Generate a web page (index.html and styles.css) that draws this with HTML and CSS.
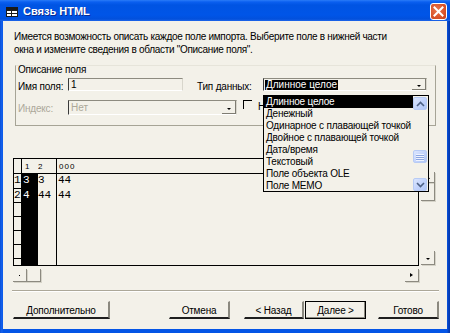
FILE: index.html
```html
<!DOCTYPE html>
<html lang="ru">
<head>
<meta charset="utf-8">
<title>Связь HTML</title>
<link rel="stylesheet" href="styles.css">
</head>
<body>
<div class="window">
  <div class="titlebar">
    <svg class="app-icon" width="12" height="10" viewBox="0 0 12 10">
      <rect x="0.5" y="0.5" width="11" height="9" fill="#fff" stroke="#1a1a1a"/>
      <line x1="0" y1="3.5" x2="12" y2="3.5" stroke="#1a1a1a"/>
      <line x1="0" y1="6.5" x2="12" y2="6.5" stroke="#1a1a1a"/>
      <line x1="5.5" y1="0" x2="5.5" y2="10" stroke="#1a1a1a"/>
      <rect x="1" y="1" width="10" height="2" fill="#1a1a1a"/>
    </svg>
    <span class="title">Связь HTML</span>
    <span class="spacer"></span>
    <span class="close">
      <svg width="11" height="11" viewBox="0 0 11 11"><path d="M1.5 1.5 L9.5 9.5 M9.5 1.5 L1.5 9.5" stroke="#fff" stroke-width="2" stroke-linecap="square"/></svg>
    </span>
  </div>
  <div class="client">
    <p class="intro">Имеется возможность описать каждое поле импорта. Выберите поле в нижней части<br>окна и измените сведения в области "Описание поля".</p>

    <div class="group">
      <div class="legend">Описание поля</div>
      <div class="row row-1">
        <span class="lbl lbl-name">Имя поля:</span>
        <span class="textbox">1</span>
        <span class="lbl lbl-type">Тип данных:</span>
        <span class="combo combo-type">
          <span class="combo-text"><span class="sel">Длинное целое</span></span>
          <span class="combo-btn"><span class="arr"></span></span>
        </span>
      </div>
      <div class="row row-2">
        <span class="lbl lbl-index">Индекс:</span>
        <span class="combo combo-index disabled">
          <span class="combo-text">Нет</span>
          <span class="combo-btn"><span class="arr"></span></span>
        </span>
        <span class="check"></span>
        <span class="lbl lbl-check">Не включать поле</span>
      </div>
    </div>

    <div class="table-area">
      <div class="datagrid">
        <div class="hcell rh"></div>
        <div class="hcell c1">1</div>
        <div class="hcell c2">2</div>
        <div class="hcell c3">000</div>

        <div class="rh">1</div>
        <div class="c1 sel-col">3</div>
        <div class="c2">3</div>
        <div class="c3">44</div>

        <div class="rh">2</div>
        <div class="c1 sel-col">4</div>
        <div class="c2">44</div>
        <div class="c3">44</div>

        <div class="rh"></div><div class="c1 sel-col"></div><div class="c2"></div><div class="c3"></div>
        <div class="rh"></div><div class="c1 sel-col"></div><div class="c2"></div><div class="c3"></div>
        <div class="rh"></div><div class="c1 sel-col"></div><div class="c2"></div><div class="c3"></div>
        <div class="rh"></div><div class="c1 sel-col"></div><div class="c2"></div><div class="c3"></div>
        <div class="rh last"></div><div class="c1 sel-col"></div><div class="c2"></div><div class="c3"></div>
      </div>
      <div class="vscroll">
        <span class="sb sb-up"><span class="tri-up"></span></span>
        <span class="sb sb-thumb"></span>
        <span class="vspace"></span>
        <span class="sb sb-down"><span class="tri-down"></span></span>
      </div>
    </div>
    <div class="hscroll">
      <span class="sb sb-h"><span class="dot"></span></span>
      <span class="sb sb-h"></span>
      <span class="hspace"></span>
      <span class="sb sb-h"><span class="tri-right"></span></span>
    </div>

    <div class="separator"></div>

    <div class="buttons">
      <span class="btn btn-more">Дополнительно</span>
      <span class="btn btn-cancel">Отмена</span>
      <span class="btn btn-back">&lt; Назад</span>
      <span class="btn btn-next">Далее &gt;</span>
      <span class="btn btn-done">Готово</span>
    </div>

    <div class="dropdown">
      <div class="items">
        <div class="item active">Длинное целое</div>
        <div class="item">Денежный</div>
        <div class="item">Одинарное с плавающей точкой</div>
        <div class="item">Двойное с плавающей точкой</div>
        <div class="item">Дата/время</div>
        <div class="item">Текстовый</div>
        <div class="item">Поле объекта OLE</div>
        <div class="item">Поле MEMO</div>
      </div>
      <div class="xp-scroll">
        <span class="xp-btn xp-up">
          <svg width="9" height="6" viewBox="0 0 9 6"><path d="M1 5 L4.5 1.5 L8 5" fill="none" stroke="#4d6185" stroke-width="1.6"/></svg>
        </span>
        <span class="xp-gap1"></span>
        <span class="xp-btn xp-thumb">
          <svg width="8" height="8" viewBox="0 0 8 8"><path d="M0 1.5H8M0 3.5H8M0 5.5H8M0 7.5H8" stroke="#eef3ff" stroke-width="1"/><path d="M0 2.5H8M0 4.5H8M0 6.5H8" stroke="#8ca6e0" stroke-width="1"/></svg>
        </span>
        <span class="xp-gap2"></span>
        <span class="xp-btn xp-down">
          <svg width="9" height="6" viewBox="0 0 9 6"><path d="M1 1 L4.5 4.5 L8 1" fill="none" stroke="#4d6185" stroke-width="1.6"/></svg>
        </span>
      </div>
    </div>
  </div>
</div>
</body>
</html>
```
FILE: styles.css
```css
* { box-sizing: border-box; }

body {
  margin: 0;
  font-family: "Liberation Sans", Arial, sans-serif;
  font-size: 10px;
  color: #000;
  background: #fff;
}

.window {
  width: 450px;
  height: 333px;
  display: flex;
  flex-direction: column;
  background: linear-gradient(90deg, #0a4fd6 0, #1663ef 2px, #0455e6 3px, #0455e6 447px, #0844c4 448px, #0036ab 450px);
}

.titlebar {
  height: 21px;
  flex: none;
  display: flex;
  align-items: center;
  padding: 0 3px 0 6px;
  background: linear-gradient(180deg, #2a7cf7 0, #0a5ff0 2px, #0054e3 5px, #0055e8 15px, #0250dc 19px, #1e66ea 21px);
  color: #fff;
}

.app-icon { flex: none; margin-top: 3px; }

.title {
  margin-left: 5px;
  font-weight: bold;
  font-size: 11px;
  text-shadow: 1px 1px 0 #0a2a90;
}

.spacer { flex: 1; }

.close {
  width: 17px;
  height: 17px;
  margin-top: 1px;
  border: 1px solid #fff;
  border-radius: 3px;
  background: radial-gradient(circle at 40% 40%, #e8764f 0, #d9532a 60%, #c13f1b 100%);
  display: flex;
  align-items: center;
  justify-content: center;
}

.client {
  flex: 1;
  margin: 0 3px 4px;
  background: #f3f1e9;
  position: relative;
  padding: 9px 0 0 10px;
}

.intro {
  margin: 0;
  padding-left: 1px;
  line-height: 13px;
  font-size: 10px;
  letter-spacing: -0.3px;
  white-space: nowrap;
}

/* group box */
.group {
  margin: 9px 0 0 2px;
  width: 421px;
  height: 61px;
  border: 1px solid #a6a496;
  border-top-color: #e6e4da;
}

.legend {
  padding-left: 2px;
  line-height: 10px;
  height: 10px;
  font-size: 10px;
  letter-spacing: -0.2px;
  margin-top: -1px;
}

.row {
  display: flex;
  align-items: flex-start;
}

.row-1 { margin-top: 3px; height: 13px; }
.row-2 { margin-top: 9px; height: 15px; }

.lbl { font-size: 10px; line-height: 11px; white-space: nowrap; letter-spacing: -0.2px; }
.lbl-name { width: 52px; padding-left: 2px; padding-top: 3px; }
.lbl-type { width: 66px; margin-left: 14px; padding-top: 3px; }
.lbl-index { width: 52px; padding-left: 2px; padding-top: 3px; color: #aca899; }
.lbl-check { margin-left: 6px; padding-top: 1px; }

.textbox {
  width: 115px;
  height: 13px;
  border-top: 1px solid #8d8b80;
  border-left: 1px solid #3a3a3a;
  border-right: 1px solid #d8d6cc;
  border-bottom: 1px solid #fff;
  line-height: 11px;
  padding-left: 2px;
  font-size: 10px;
}

.combo {
  display: flex;
  border-top: 1px solid #8d8b80;
  border-left: 1px solid #3a3a3a;
  border-right: 1px solid #d8d6cc;
  border-bottom: 1px solid #fff;
}

.combo-type { width: 164px; height: 13px; }
.combo-index { width: 169px; height: 15px; }

.combo-text {
  flex: 1;
  line-height: 11px;
  padding-left: 1px;
  font-size: 10px;
}

.combo-index .combo-text { color: #aca899; padding-top: 1px; padding-left: 2px; }

.sel { background: #000; color: #fff; padding: 0 1px; display: inline-block; line-height: 10px; }

.combo-btn {
  width: 14px;
  border-right: 1px solid #7e7c72;
  border-bottom: 1px solid #7e7c72;
  display: flex;
  align-items: center;
  justify-content: center;
}

.arr {
  width: 0; height: 0;
  border-left: 2px solid transparent;
  border-right: 2px solid transparent;
  border-top: 2px solid #000;
  margin-top: 3px;
}

.check {
  width: 9px;
  height: 9px;
  margin: 0 0 0 6px;
  border-top: 1px solid #000;
  border-left: 1px solid #000;
}

/* data grid */
.table-area {
  display: flex;
  margin-top: 32px;
  height: 108px;
}

.datagrid {
  width: 406px;
  height: 108px;
  border: 1px solid #000;
  display: grid;
  grid-template-columns: 8px 16px 19px 1fr;
  grid-template-rows: 15px 15px 14px 14px 14px 14px 14px 1fr;
  font-family: "Liberation Mono", "Courier New", monospace;
  font-size: 11px;
  line-height: 13px;
  overflow: hidden;
}

.datagrid > div { overflow: hidden; white-space: nowrap; }

.hcell {
  border-bottom: 1px solid #000;
  font-family: "Liberation Sans", Arial, sans-serif;
  font-size: 8px;
  letter-spacing: 1px;
  padding-top: 1px;
}

.hcell.c1 { padding-left: 3px; }
.hcell.c2 { padding-left: 0; }
.hcell.c3 { padding-left: 2px; }

.rh {
  border-right: 1px solid #000;
  border-bottom: 1px solid #000;
  padding-left: 1px;
  text-indent: -1px;
}

.rh.last { border-bottom: none; }

.c1 { padding-left: 1px; }
.c2 { border-right: 1px solid #000; padding-left: 0; }
.c3 { padding-left: 1px; }

.sel-col { background: #000; color: #fff; }

.vscroll {
  width: 14px;
  margin-left: 2px;
  display: flex;
  flex-direction: column;
}

.sb {
  display: flex;
  align-items: center;
  justify-content: center;
  border-right: 1px solid #8c8a80;
  border-bottom: 1px solid #8c8a80;
  box-shadow: 1px 1px 0 #d5d3c8;
  flex: none;
}

.sb-up { height: 11px; margin-top: 14px; }
.sb-thumb { height: 18px; }
.vspace { flex: 1; }
.sb-down { height: 14px; margin-bottom: 1px; }

.tri-up {
  width: 0; height: 0;
  border-left: 2px solid transparent;
  border-right: 2px solid transparent;
  border-bottom: 3px solid #000;
}

.tri-down {
  width: 0; height: 0;
  border-left: 2px solid transparent;
  border-right: 2px solid transparent;
  border-top: 2px solid #000;
  margin-top: 2px;
}

.tri-right {
  width: 0; height: 0;
  border-top: 2px solid transparent;
  border-bottom: 2px solid transparent;
  border-left: 3px solid #000;
}

.dot { width: 1px; height: 1px; background: #000; }

.hscroll {
  display: flex;
  width: 406px;
  height: 13px;
  margin-top: 3px;
}

.sb-h { width: 14px; }
.hspace { flex: 1; }

.separator {
  margin: 8px 0 0 -1px;
  width: 427px;
  height: 2px;
  border-top: 1px solid #aca899;
  border-bottom: 1px solid #fff;
}

.buttons {
  display: flex;
  margin-top: 9px;
  height: 18px;
}

.btn {
  display: flex;
  align-items: center;
  justify-content: center;
  height: 18px;
  font-size: 10px;
  letter-spacing: -0.2px;
  border-top: 1px solid #f3f1e9;
  border-left: 1px solid #f3f1e9;
  border-right: 2px solid #8b897f;
  border-bottom: 2px solid #1e1e1e;
  padding-top: 1px;
}

.btn-more { width: 97px; }
.btn-cancel { width: 61px; margin-left: 59px; }
.btn-back { width: 60px; margin-left: 14px; }
.btn-next {
  width: 61px;
  margin-left: 1px;
  border: 1px solid #000;
  box-shadow: inset -1px -1px 0 #8b897f;
}
.btn-done { width: 61px; margin-left: 12px; }

/* open dropdown list (overlay) */
.dropdown {
  position: absolute;
  left: 260px;
  top: 74px;
  width: 166px;
  height: 97px;
  border: 1px solid #000;
  background: #f3f1e9;
  display: flex;
}

.items {
  width: 149px;
  font-size: 10px;
  letter-spacing: -0.2px;
}

.item {
  height: 12px;
  line-height: 12px;
  padding-left: 2px;
  white-space: nowrap;
}

.item.active { background: #000; color: #fff; }

.xp-scroll {
  width: 15px;
  display: flex;
  flex-direction: column;
  padding: 1px 0 0 0;
}

.xp-btn {
  width: 14px;
  height: 13px;
  border: 1px solid #b7cbf5;
  border-radius: 2px;
  background: linear-gradient(135deg, #dbe6fd 0, #c3d4fc 50%, #b0c6f6 100%);
  display: flex;
  align-items: center;
  justify-content: center;
  flex: none;
}

.xp-gap1 { height: 40px; flex: none; }
.xp-gap2 { height: 15px; flex: none; }
```
